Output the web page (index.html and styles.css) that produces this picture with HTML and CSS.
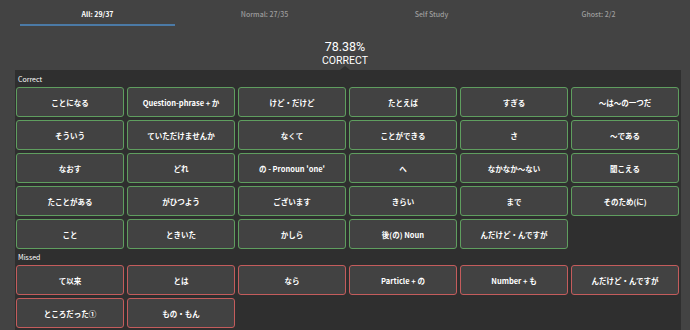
FILE: index.html
```html
<!DOCTYPE html>
<html lang="ja">
<head>
    <meta charset="UTF-8" />
    <title>Quiz Results</title>
    <link rel="stylesheet" href="styles.css">
</head>
<body>
    <div class="tabs">
        <div class="tab active"><span class="tab-label">All: 29/37</span><span class="tab-line"></span></div>
        <div class="tab"><span class="tab-label">Normal: 27/35</span><span class="tab-line"></span></div>
        <div class="tab"><span class="tab-label">Self Study</span><span class="tab-line"></span></div>
        <div class="tab"><span class="tab-label">Ghost: 2/2</span><span class="tab-line"></span></div>
    </div>

    <div class="score">
        <div class="score-percent">78.38%</div>
        <div class="score-label">CORRECT</div>
    </div>

    <div class="results">
        <div class="section-title">Correct</div>
        <div class="grid">
            <button class="item correct">ことになる</button>
            <button class="item correct">Question-phrase + か</button>
            <button class="item correct">けど・だけど</button>
            <button class="item correct">たとえば</button>
            <button class="item correct">すぎる</button>
            <button class="item correct">～は～の一つだ</button>
            <button class="item correct">そういう</button>
            <button class="item correct">ていただけませんか</button>
            <button class="item correct">なくて</button>
            <button class="item correct">ことができる</button>
            <button class="item correct">さ</button>
            <button class="item correct">～である</button>
            <button class="item correct">なおす</button>
            <button class="item correct">どれ</button>
            <button class="item correct">の - Pronoun 'one'</button>
            <button class="item correct">へ</button>
            <button class="item correct">なかなか～ない</button>
            <button class="item correct">聞こえる</button>
            <button class="item correct">たことがある</button>
            <button class="item correct">がひつよう</button>
            <button class="item correct">ございます</button>
            <button class="item correct">きらい</button>
            <button class="item correct">まで</button>
            <button class="item correct">そのため(に)</button>
            <button class="item correct">こと</button>
            <button class="item correct">ときいた</button>
            <button class="item correct">かしら</button>
            <button class="item correct">後(の) Noun</button>
            <button class="item correct">んだけど・んですが</button>
        </div>

        <div class="section-title">Missed</div>
        <div class="grid">
            <button class="item missed">て以来</button>
            <button class="item missed">とは</button>
            <button class="item missed">なら</button>
            <button class="item missed">Particle + の</button>
            <button class="item missed">Number + も</button>
            <button class="item missed">んだけど・んですが</button>
            <button class="item missed">ところだった①</button>
            <button class="item missed">もの・もん</button>
        </div>
    </div>
</body>
</html>
```

FILE: styles.css
```css
/* Global */
body {
    margin: 0;
    background: #434343;
    font-family: "Noto Sans CJK JP", "Noto Sans", sans-serif;
    color: #ffffff;
    height: 330px;
    overflow: hidden;
}

/* Tabs */
.tabs {
    display: flex;
    padding: 0 8px 0 14px;
    height: 26px;
}

.tab {
    flex: 1;
    display: flex;
    flex-direction: column;
    align-items: center;
    padding-top: 8px;
    box-sizing: border-box;
}

.tab-label {
    font-size: 7px;
    line-height: 12px;
    color: #9c9c9c;
    font-weight: 500;
}

.tab-line {
    align-self: stretch;
    margin: 4px 6px 0;
    height: 2px;
    background: transparent;
}

.tab.active .tab-label {
    color: #ffffff;
    font-weight: 700;
}

.tab.active .tab-line {
    background: #4b7aa6;
}

/* Score */
.score {
    text-align: center;
    padding: 14px 0 3px;
    font-family: Roboto, "Noto Sans", sans-serif;
}

.score-percent {
    font-size: 12.5px;
    line-height: 14px;
}

.score-label {
    font-size: 10.5px;
    line-height: 13px;
}

/* Results panel */
.results {
    position: relative;
    margin: 0 9px 0 15px;
    background: #2f2f2f;
    padding: 1px 2px 2px 1px;
}

.results::before {
    content: "";
    position: absolute;
    top: -4px;
    left: 325px;
    border-left: 5px solid transparent;
    border-right: 5px solid transparent;
    border-bottom: 4px solid #2f2f2f;
}

.section-title {
    font-size: 7px;
    line-height: 10px;
    padding: 3px 2px 3px;
}

.grid {
    display: grid;
    grid-template-columns: repeat(6, 1fr);
    gap: 3px;
}

.item {
    height: 30px;
    background: #424242;
    border: 1.5px solid #5f9e5f;
    border-radius: 3px;
    color: #ffffff;
    font-family: "Noto Sans CJK JP", "Noto Sans", sans-serif;
    font-size: 7.5px;
    font-weight: 700;
    padding: 0 4px;
    white-space: nowrap;
}

.item.missed {
    border-color: #c45c5c;
}
```
